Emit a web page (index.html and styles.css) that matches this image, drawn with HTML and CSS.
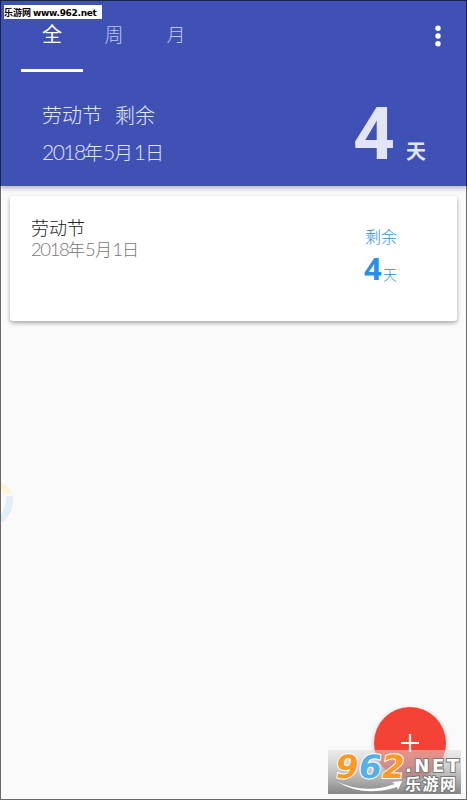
FILE: index.html
```html
<!DOCTYPE html>
<html lang="zh-CN">
<head>
<meta charset="utf-8">
<title>劳动节</title>
<link rel="stylesheet" href="styles.css">
</head>
<body>
<div class="screen">
  <header class="header">
    <nav class="tabs">
      <a class="tab active">全</a>
      <a class="tab">周</a>
      <a class="tab">月</a>
      <svg class="more" width="8" height="24" viewBox="0 0 8 24"><circle cx="4" cy="4.200" r="2.700"/><circle cx="4" cy="12" r="2.700"/><circle cx="4" cy="19.800" r="2.700"/></svg>
    </nav>
    <section class="hero">
      <div class="summary">
        <div class="event">劳动节<span class="remain">剩余</span></div>
        <div class="date"><span class="num">2018</span>年<span class="num five">5</span>月<span class="num one">1</span>日</div>
      </div>
      <div class="count"><b class="big">4</b><b class="unit">天</b></div>
    </section>
  </header>
  <main>
    <article class="card">
      <div class="info">
        <div class="title">劳动节</div>
        <div class="date small"><span class="num">2018</span>年<span class="num five">5</span>月<span class="num one">1</span>日</div>
      </div>
      <div class="left">
        <div class="left-label">剩余</div>
        <div class="left-value"><b>4</b><span>天</span></div>
      </div>
    </article>
  </main>
  <div class="site-tag">乐游网 <span>www.962.net</span></div>
  <svg class="ring" width="14" height="60" viewBox="0 0 14 60">
    <path d="M0 15Q6 17 9 23" stroke="#fbf3dc"/><path d="M9.500 25Q11 39 0 49" stroke="#e1eef7"/>
  </svg>
  <button class="fab"><svg width="20" height="20" viewBox="0 0 20 20"><path d="M10 1v18M1 10h18"/></svg></button>
  <svg class="watermark" width="133" height="44" viewBox="0 0 133 44">
    <defs><linearGradient id="shade" x1="0" y1="0" x2="0" y2="1"><stop offset="0" stop-color="#ddd" stop-opacity=".5"/><stop offset=".5" stop-color="#aaa" stop-opacity=".7"/><stop offset="1" stop-color="#777" stop-opacity=".9"/></linearGradient></defs>
    <rect width="133" height="44" fill="url(#shade)"/>
    <path class="swoosh" d="M8 31Q36 45 67 34L64 32L74 31L70 40L69 37Q35 48 8 31Z"/>
    <g class="digits" transform="translate(6 28) skewX(-9)"><text textLength="23" lengthAdjust="spacingAndGlyphs" fill="#ff9925">9</text><text x="23" textLength="23" lengthAdjust="spacingAndGlyphs" fill="#55b0e6">6</text><text x="46" textLength="23" lengthAdjust="spacingAndGlyphs" fill="#ff9925">2</text></g>
    <text class="net" x="77" y="21.500" textLength="54">.NET</text>
    <text class="site" x="77" y="40" textLength="51">乐游网</text>
  </svg>
</div>
</body>
</html>
```
FILE: styles.css
```css
* { box-sizing: border-box; }
body { margin: 0; font-family: "Noto Sans CJK SC", sans-serif; }
.screen {
  position: relative;
  height: 800px;
  overflow: hidden;
  background: #fafafa;
}
.screen::after {
  content: "";
  position: absolute;
  inset: 0;
  border: 1px solid rgba(0, 0, 0, .58);
  pointer-events: none;
}
.header {
  height: 186px;
  background: #3f51b5;
  box-shadow: 0 2px 5px rgba(0, 0, 0, .3);
  color: #e1e5f6;
}
.tabs { display: flex; height: 72px; padding-left: 21px; }
.tab {
  width: 62px;
  padding-top: 19px;
  font-size: 19px;
  line-height: 30px;
  font-weight: 300;
  text-align: center;
  color: #c0c7ec;
}
.tab.active { color: #fff; font-weight: 400; font-size: 20px; border-bottom: 3px solid #fff; }
.more { margin: 24px 25px 0 auto; fill: #fff; }
.hero {
  display: flex;
  justify-content: space-between;
  height: 114px;
  padding: 28px 41px 0 42px;
}
.event { height: 37px; font-size: 20px; line-height: 30px; font-weight: 300; white-space: nowrap; }
.remain { margin-left: 13px; }
.date { display: flex; font-size: 19px; line-height: 30px; font-weight: 300; }
.date .num { width: 42px; font-family: Lato, sans-serif; font-size: 21px; letter-spacing: -1.500px; }
.date .num.five { width: 11px; }
.date .num.one { width: 12px; text-align: center; }
.count { display: flex; align-items: baseline; height: 60px; padding-top: 1px; font-family: Roboto, "Noto Sans CJK SC", sans-serif; }
.big { font-size: 73px; line-height: 66px; font-weight: 700; }
.unit { margin-left: 11px; font-size: 20px; }
.card {
  display: flex;
  justify-content: space-between;
  height: 125px;
  margin: 10px 10px 0;
  padding: 19px 59px 0 21px;
  border-radius: 3px;
  background: #fff;
  box-shadow: 0 2px 4px rgba(0, 0, 0, .34);
}
.title { font-size: 18px; line-height: 25px; color: #222; font-weight: 300; }
.date.small { font-size: 17px; line-height: 18px; color: #777; }
.date.small .num { width: 37px; font-size: 18.500px; letter-spacing: -1.400px; }
.date.small .num.five { width: 10px; }
.date.small .num.one { width: 10px; }
.left { width: 33px; padding-top: 10px; color: #2b8fd5; }
.left-label { font-size: 16px; line-height: 23px; font-weight: 300; white-space: nowrap; }
.left-value { display: flex; align-items: baseline; height: 38px; padding-top: 1px; }
.left-value b { width: 18px; margin-left: -1px; margin-right: 1px; font: 700 31px/38px "Open Sans", sans-serif; color: #2490e7; }
.left-value span { font-size: 14px; font-weight: 300; }
.site-tag {
  position: absolute;
  left: 4px;
  top: 5px;
  width: 98px;
  height: 14px;
  background: #fff;
  color: #000;
  font-size: 9px;
  font-weight: 700;
  line-height: 15px;
  white-space: nowrap;
}
.site-tag span { font-family: "DejaVu Sans", sans-serif; font-size: 9px; letter-spacing: -.3px; }
.ring { position: absolute; left: 0; top: 471px; fill: none; stroke-width: 7; }
.fab {
  position: absolute;
  left: 374px;
  top: 707px;
  display: grid;
  place-items: center;
  width: 72px;
  height: 72px;
  padding: 0;
  border: 0;
  border-radius: 50%;
  background: #f44336;
  box-shadow: 0 2px 5px rgba(0, 0, 0, .25);
}
.fab path { stroke: #fff; stroke-width: 2.200; }
.watermark { position: absolute; left: 328px; top: 750px; }
.watermark text { stroke: #fff; stroke-width: 2; paint-order: stroke; }
.digits { font: 700 32px "DejaVu Sans", sans-serif; }
.swoosh { fill: #fff; }
.watermark .net { font: 700 18px "DejaVu Sans", sans-serif; fill: #fff; stroke: #777; }
.watermark .site { font: 700 16px "Noto Sans CJK SC", sans-serif; fill: #fff; stroke: #777; }
```
